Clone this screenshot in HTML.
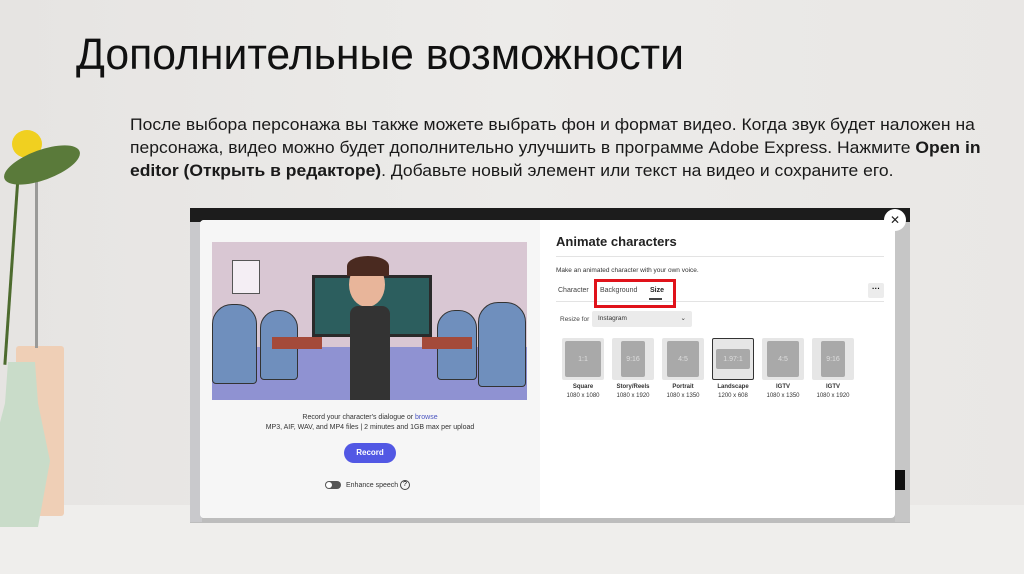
<!DOCTYPE html>
<html><head><meta charset="utf-8"><style>
*{margin:0;padding:0;box-sizing:border-box}
body{width:1024px;height:574px;overflow:hidden;background:linear-gradient(90deg,#e6e4e2,#ecebe9 50%,#e9e7e5);font-family:"Liberation Sans","DejaVu Sans",sans-serif;position:relative}
.a{position:absolute}
h1{position:absolute;left:76px;top:30px;font-weight:normal;font-size:44px;color:#111;white-space:nowrap;transform:scaleX(0.97);transform-origin:left top}
.p{position:absolute;left:130px;font-size:17px;color:#1a1a1a;white-space:nowrap;transform:scaleX(1.03);transform-origin:left top}
.s{font-size:7px;color:#333;text-align:center;white-space:nowrap}
.card{position:absolute;top:338px;width:42px;height:42px;background:#e6e6e6;border-radius:2px}
.card div{position:absolute;background:#a9a9a9;color:#ddd;font-size:7px;display:flex;align-items:center;justify-content:center;border-radius:2px}
.lbl{position:absolute;top:383px;width:60px;text-align:center;font-size:6px;line-height:9px;color:#333}
</style></head><body>
<div class="a" style="left:0;top:505px;width:1024px;height:69px;background:#efeeec"></div>
<div class="a" style="left:16px;top:346px;width:48px;height:170px;background:#efcfb6;border-radius:3px"></div>
<div class="a" style="left:35px;top:170px;width:3px;height:178px;background:#9a9a98"></div>
<div class="a" style="left:10px;top:175px;width:3px;height:190px;background:#4d6b2e;transform:rotate(4deg)"></div>
<div class="a" style="left:12px;top:130px;width:30px;height:28px;border-radius:50%;background:#f0d020"></div>
<div class="a" style="left:2px;top:150px;width:80px;height:30px;border-radius:50%;background:#5a7a3a;transform:rotate(-20deg)"></div>
<div class="a" style="left:-10px;top:362px;width:60px;height:165px;background:#c9dcc9;clip-path:polygon(30% 0,75% 0,80% 25%,100% 60%,80% 100%,0 100%,0 60%,25% 25%)"></div>
<h1>Дополнительные возможности</h1>
<div class="p" style="top:115px">После выбора персонажа вы также можете выбрать фон и формат видео. Когда звук будет наложен на</div>
<div class="p" style="top:138px">персонажа, видео можно будет дополнительно улучшить в программе Adobe Express. Нажмите <b>Open in</b></div>
<div class="p" style="top:161px"><b>editor (Открыть в редакторе)</b>. Добавьте новый элемент или текст на видео и сохраните его.</div>
<div class="a" style="left:190px;top:208px;width:720px;height:315px;background:#bdbdbd"></div>
<div class="a" style="left:190px;top:208px;width:720px;height:14px;background:#1c1c1c"></div>
<div class="a" style="left:190px;top:222px;width:12px;height:300px;background:#c9c9cc"></div>
<div class="a" style="left:895px;top:222px;width:15px;height:300px;background:#c6c6c6"></div>
<div class="a" style="left:895px;top:470px;width:10px;height:20px;background:#111"></div>
<div class="a" style="left:200px;top:220px;width:695px;height:298px;background:#fff;border-radius:4px;overflow:hidden">
 <div class="a" style="left:0;top:0;width:340px;height:298px;background:#f6f6f6"></div>
 <div class="a" style="left:12px;top:22px;width:315px;height:158px;background:#d9c7d3;overflow:hidden">
  <div class="a" style="left:0;top:105px;width:315px;height:53px;background:#8f92d2"></div>
  <div class="a" style="left:100px;top:33px;width:120px;height:62px;background:#2c5e5e;border:3px solid #2a2a2a"></div>
  <div class="a" style="left:20px;top:18px;width:28px;height:34px;background:#f4eef4;border:1px solid #555"></div>
  <div class="a" style="left:0;top:62px;width:45px;height:80px;background:#6f8fbd;border-radius:20px 20px 4px 4px;border:1px solid #333"></div>
  <div class="a" style="left:48px;top:68px;width:38px;height:70px;background:#6f8fbd;border-radius:18px 18px 4px 4px;border:1px solid #333"></div>
  <div class="a" style="left:60px;top:95px;width:50px;height:12px;background:#a44a3a"></div>
  <div class="a" style="left:225px;top:68px;width:40px;height:70px;background:#6f8fbd;border-radius:18px 18px 4px 4px;border:1px solid #333"></div>
  <div class="a" style="left:266px;top:60px;width:48px;height:85px;background:#6f8fbd;border-radius:20px 20px 4px 4px;border:1px solid #333"></div>
  <div class="a" style="left:210px;top:95px;width:50px;height:12px;background:#a44a3a"></div>
  <div class="a" style="left:137px;top:20px;width:36px;height:45px;border-radius:50%;background:#e8b59a"></div>
  <div class="a" style="left:135px;top:14px;width:42px;height:20px;border-radius:50% 50% 0 0;background:#4a2a20"></div>
  <div class="a" style="left:138px;top:64px;width:40px;height:94px;background:#333;border-radius:8px 8px 0 0"></div>
 </div>
 <div class="a s" style="left:0;top:194px;width:340px">Record your character's dialogue or <span style="color:#4a55c0">browse</span></div>
 <div class="a s" style="left:0;top:204px;width:340px">MP3, AIF, WAV, and MP4 files | 2 minutes and 1GB max per upload</div>
 <div class="a" style="left:144px;top:223px;width:52px;height:20px;border-radius:10px;background:#5258e4;color:#fff;font-size:8px;font-weight:bold;text-align:center;line-height:20px">Record</div>
 <div class="a" style="left:125px;top:261px;width:16px;height:8px;border-radius:4px;background:#555"></div>
 <div class="a" style="left:126px;top:262px;width:6px;height:6px;border-radius:3px;background:#fff"></div>
 <div class="a s" style="left:146px;top:262px">Enhance speech</div>
 <div class="a" style="left:200px;top:260px;width:10px;height:10px;border-radius:50%;border:1px solid #444;font-size:7px;text-align:center;line-height:8px">?</div>
 <div class="a" style="left:356px;top:14px;font-size:13px;font-weight:bold;color:#222">Animate characters</div>
 <div class="a" style="left:356px;top:36px;width:328px;height:1px;background:#e3e3e3"></div>
 <div class="a" style="left:356px;top:47px;font-size:6.5px;color:#333">Make an animated character with your own voice.</div>
 <div class="a" style="left:358px;top:67px;font-size:7px;color:#444">Character</div>
 <div class="a" style="left:400px;top:67px;font-size:7px;color:#444">Background</div>
 <div class="a" style="left:450px;top:67px;font-size:7px;font-weight:bold;color:#222">Size</div>
 <div class="a" style="left:449px;top:78px;width:13px;height:2px;background:#444"></div>
 <div class="a" style="left:356px;top:81px;width:328px;height:1px;background:#e3e3e3"></div>
 <div class="a" style="left:394px;top:59px;width:82px;height:29px;border:3px solid #e0121a"></div>
 <div class="a" style="left:668px;top:63px;width:16px;height:15px;background:#ececec;border-radius:2px;font-size:8px;text-align:center;line-height:12px;font-weight:bold">···</div>
 <div class="a" style="left:360px;top:96px;font-size:6.5px;color:#444">Resize for</div>
 <div class="a" style="left:392px;top:91px;width:100px;height:16px;background:#ebebeb;border-radius:2px;font-size:6.5px;color:#333;line-height:16px;padding-left:6px">Instagram<span style="position:absolute;right:6px">⌄</span></div>
</div>
<div class="card" style="left:562px"><div style="left:3px;top:3px;width:36px;height:36px">1:1</div></div>
<div class="card" style="left:612px"><div style="left:9px;top:3px;width:24px;height:36px">9:16</div></div>
<div class="card" style="left:662px"><div style="left:5px;top:3px;width:32px;height:36px">4:5</div></div>
<div class="card" style="left:712px;border:1px solid #333"><div style="left:3px;top:10px;width:34px;height:20px">1.97:1</div></div>
<div class="card" style="left:762px"><div style="left:5px;top:3px;width:32px;height:36px">4:5</div></div>
<div class="card" style="left:812px"><div style="left:9px;top:3px;width:24px;height:36px">9:16</div></div>
<div class="lbl" style="left:553px"><b>Square</b><br>1080 x 1080</div>
<div class="lbl" style="left:603px"><b>Story/Reels</b><br>1080 x 1920</div>
<div class="lbl" style="left:653px"><b>Portrait</b><br>1080 x 1350</div>
<div class="lbl" style="left:703px"><b>Landscape</b><br>1200 x 608</div>
<div class="lbl" style="left:753px"><b>IGTV</b><br>1080 x 1350</div>
<div class="lbl" style="left:803px"><b>IGTV</b><br>1080 x 1920</div>
<div class="a" style="left:884px;top:209px;width:22px;height:22px;border-radius:50%;background:#fff;font-size:12px;text-align:center;line-height:22px;color:#222">✕</div>
</body></html>
